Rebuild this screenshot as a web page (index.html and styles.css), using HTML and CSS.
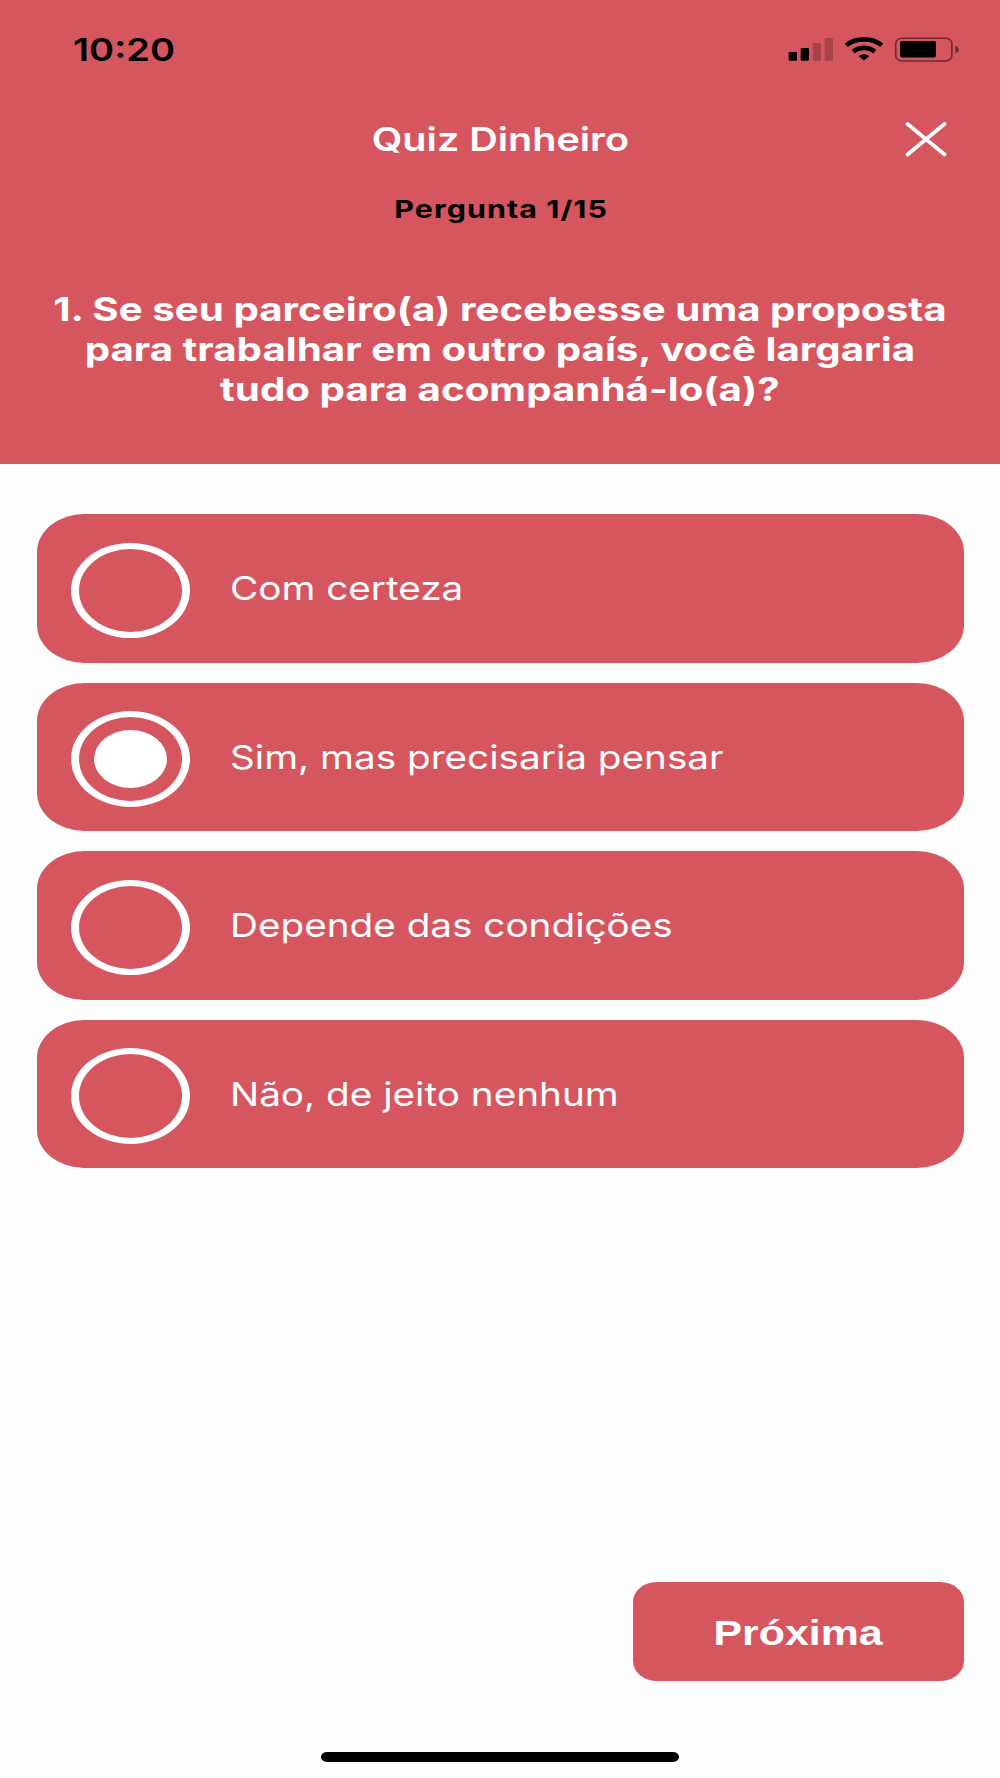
FILE: index.html
```html
<!DOCTYPE html>
<html lang="pt-BR">
<head>
<meta charset="utf-8">
<title>Quiz Dinheiro</title>
<link rel="stylesheet" href="styles.css">
</head>
<body>
<div class="screen">
  <header class="header">
    <div class="status">
      <span class="time">10:20</span>
      <svg class="indicators" width="172" height="26" viewBox="0 0 172 26">
        <rect x="0.700" y="15" width="8.300" height="8.700" rx="1.200"/>
        <rect x="12.700" y="11" width="8.300" height="12.700" rx="1.200"/>
        <g opacity=".22">
          <rect x="24.700" y="6" width="8.300" height="17.700" rx="1.200"/>
          <rect x="36.700" y="1" width="8.300" height="22.700" rx="1.200"/>
        </g>
        <g fill="none" stroke="#000" stroke-width="4.700">
          <path d="M58.300 8.300C68 .4 84 .4 93.700 8.300"/>
          <path d="M65.200 14.600C71.500 9.600 80.500 9.600 86.800 14.600"/>
        </g>
        <path d="M70.700 19.200C73.500 16.600 78.500 16.600 81.300 19.200L76 23.600Z"/>
        <rect x="107.700" y="1.200" width="56.200" height="22.800" rx="6.500" ry="5.300" fill="none" stroke="#000" stroke-width="1.600" opacity=".5"/>
        <rect x="112" y="4" width="36" height="16.500" rx="2"/>
        <path d="M167.300 8.800C172 10.500 172 14.700 167.300 16.400Z" opacity=".5"/>
      </svg>
    </div>
    <div class="titlebar">
      <h1 class="title">Quiz Dinheiro</h1>
      <svg class="close" width="44" height="36" viewBox="0 0 44 36">
        <path d="M3.500 3L40.500 33.500M40.500 3L3.500 33.500" fill="none" stroke="#fff" stroke-width="3.700" stroke-linecap="round"/>
      </svg>
    </div>
    <p class="progress">Pergunta 1/15</p>
    <h2 class="question">1. Se seu parceiro(a) recebesse uma proposta<br>para trabalhar em outro país, você largaria<br>tudo para acompanhá-lo(a)?</h2>
  </header>
  <main class="options">
    <div class="option"><span class="radio"></span><span class="label">Com certeza</span></div>
    <div class="option"><span class="radio checked"></span><span class="label">Sim, mas precisaria pensar</span></div>
    <div class="option"><span class="radio"></span><span class="label">Depende das condições</span></div>
    <div class="option"><span class="radio"></span><span class="label">Não, de jeito nenhum</span></div>
  </main>
  <footer class="footer">
    <div class="next"><span class="next-label">Próxima</span></div>
    <div class="home-bar"></div>
  </footer>
</div>
</body>
</html>
```
FILE: styles.css
```css
* {
  box-sizing: border-box;
  margin: 0;
  padding: 0;
}

body {
  background: #fefefe;
  font-family: Inter, "Liberation Sans", sans-serif;
}

.screen {
  display: flex;
  flex-direction: column;
  width: 1000px;
  height: 1778px;
}

.header {
  display: flex;
  flex-direction: column;
  align-items: center;
  height: 464px;
  background: #d65660;
  color: #fff;
}

.status {
  display: flex;
  justify-content: space-between;
  align-items: flex-start;
  width: 100%;
  height: 119px;
  padding: 30px 40px 0 73px;
  color: #000;
}

.time {
  margin-top: 1px;
  font-size: 31.5px;
  font-weight: 600;
  line-height: 38px;
  transform: scaleX(1.208);
  transform-origin: left;
}

.indicators {
  margin-top: 7px;
}

.titlebar {
  display: grid;
  grid-template-columns: 1fr auto 1fr;
  align-items: center;
  width: 100%;
  height: 40px;
  padding: 0 52px;
}

.title {
  grid-column: 2;
  font-size: 33px;
  font-weight: 600;
  line-height: 40px;
  white-space: nowrap;
  transform: scaleX(1.197);
}

.close {
  justify-self: end;
}

.progress {
  margin-top: 35px;
  padding-left: 1px;
  color: #000;
  font-size: 24.5px;
  font-weight: 700;
  line-height: 30px;
  letter-spacing: 0.84px;
  transform: scaleX(1.243);
}

.question {
  margin-top: 64.5px;
  font-size: 33px;
  font-weight: 700;
  line-height: 40.2px;
  text-align: center;
  white-space: nowrap;
  transform: scaleX(1.221);
}

.options {
  display: flex;
  flex-direction: column;
  gap: 20px;
  padding: 50px 36.5px 0;
}

.option {
  display: flex;
  align-items: center;
  gap: 40px;
  height: 148.6px;
  padding-left: 34.5px;
  border-radius: 47px / 38px;
  background: #d65660;
  color: #fff;
}

.radio {
  display: flex;
  align-items: center;
  justify-content: center;
  width: 119px;
  height: 95.5px;
  margin-top: 4px;
  border: solid #fff;
  border-width: 6.7px 8px;
  border-radius: 50%;
}

.checked::after {
  content: "";
  width: 73px;
  height: 58px;
  border-radius: 50%;
  background: #fff;
}

.label {
  font-size: 33px;
  line-height: 40px;
  white-space: nowrap;
  transform: scaleX(1.172);
  transform-origin: left;
}

.footer {
  display: flex;
  flex: 1;
  flex-direction: column;
  justify-content: flex-end;
  align-items: center;
  padding: 0 36.5px 16px;
}

.next {
  display: flex;
  align-items: center;
  justify-content: center;
  align-self: flex-end;
  width: 330.5px;
  height: 99px;
  padding-top: 4px;
  border-radius: 24px / 20px;
  background: #d65660;
  color: #fff;
}

.next-label {
  font: 700 35px/40px "Liberation Sans", sans-serif;
  transform: scaleX(1.226);
}

.home-bar {
  width: 358px;
  height: 10px;
  margin-top: 71.5px;
  border-radius: 6px / 5px;
  background: #000;
}
```
